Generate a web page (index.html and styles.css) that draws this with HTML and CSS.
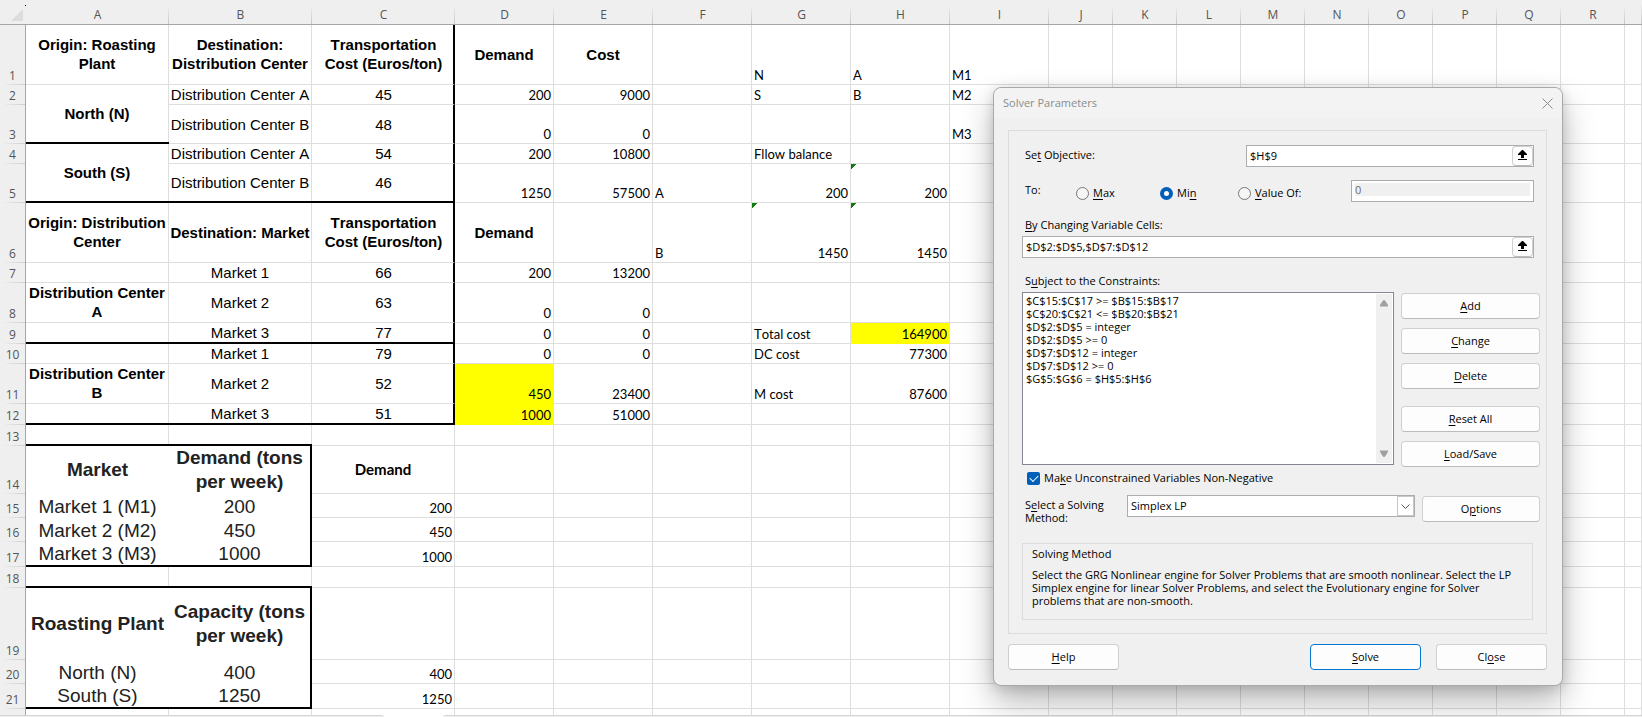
FILE: index.html
```html
<!DOCTYPE html>
<html lang="en">
<head>
    <meta charset="UTF-8">
    <meta name="viewport" content="width=device-width, initial-scale=1.0">
    <title>Transportation Model - Solver</title>
    <link rel="stylesheet" href="styles.css">
</head>
<body>
    <div class="workbook">
        <table class="sheet">
            <colgroup>
                <col class="col-head">
                <col class="col-wide" span="3">
                <col class="col-mid" span="6">
                <col class="col-small" span="9">
                <col>
            </colgroup>
            <thead>
                <tr>
                    <th class="corner"><svg width="12" height="12" viewBox="0 0 12 12"><path d="M12 0V12H0Z" fill="#dcdcdc"/></svg></th>
                    <th>A</th><th>B</th><th>C</th><th>D</th><th>E</th><th>F</th><th>G</th><th>H</th><th>I</th>
                    <th>J</th><th>K</th><th>L</th><th>M</th><th>N</th><th>O</th><th>P</th><th>Q</th><th>R</th><th></th>
                </tr>
            </thead>
            <tbody id="cells">
                <tr class="h60">
                    <th>1</th>
                    <td class="arial bold">Origin: Roasting Plant</td>
                    <td class="arial bold">Destination: Distribution Center</td>
                    <td class="arial bold edge-right">Transportation Cost (Euros/ton)</td>
                    <td class="arial bold">Demand</td>
                    <td class="arial bold">Cost</td>
                    <td></td><td>N</td><td>A</td><td>M1</td>
                </tr>
                <tr class="h20">
                    <th>2</th>
                    <td class="arial bold edge-bottom" rowspan="2">North (N)</td>
                    <td class="arial">Distribution Center A</td>
                    <td class="arial edge-right">45</td>
                    <td class="num">200</td><td class="num">9000</td>
                    <td></td><td>S</td><td>B</td><td>M2</td>
                </tr>
                <tr class="h39">
                    <th>3</th>
                    <td class="arial">Distribution Center B</td>
                    <td class="arial edge-right">48</td>
                    <td class="num">0</td><td class="num">0</td>
                    <td></td><td></td><td></td><td>M3</td>
                </tr>
                <tr class="h20">
                    <th>4</th>
                    <td class="arial bold edge-bottom" rowspan="2">South (S)</td>
                    <td class="arial">Distribution Center A</td>
                    <td class="arial edge-right">54</td>
                    <td class="num">200</td><td class="num">10800</td>
                    <td></td><td>Fllow balance</td><td></td><td></td>
                </tr>
                <tr class="h39">
                    <th>5</th>
                    <td class="arial edge-bottom">Distribution Center B</td>
                    <td class="arial edge-right edge-bottom">46</td>
                    <td class="num">1250</td><td class="num">57500</td>
                    <td>A</td><td class="num">200</td><td class="num flag">200</td><td></td>
                </tr>
                <tr class="h60">
                    <th>6</th>
                    <td class="arial bold">Origin: Distribution Center</td>
                    <td class="arial bold">Destination: Market</td>
                    <td class="arial bold edge-right">Transportation Cost (Euros/ton)</td>
                    <td class="arial bold">Demand</td><td></td>
                    <td>B</td><td class="num flag">1450</td><td class="num flag">1450</td><td></td>
                </tr>
                <tr class="h20">
                    <th>7</th>
                    <td></td><td class="arial">Market 1</td><td class="arial edge-right">66</td>
                    <td class="num">200</td><td class="num">13200</td>
                    <td></td><td></td><td></td><td></td>
                </tr>
                <tr class="h40">
                    <th>8</th>
                    <td class="arial bold">Distribution Center A</td><td class="arial">Market 2</td><td class="arial edge-right">63</td>
                    <td class="num">0</td><td class="num">0</td>
                    <td></td><td></td><td></td><td></td>
                </tr>
                <tr class="h21">
                    <th>9</th>
                    <td class="edge-bottom"></td><td class="arial edge-bottom">Market 3</td><td class="arial edge-right edge-bottom">77</td>
                    <td class="num">0</td><td class="num">0</td>
                    <td></td><td>Total cost</td><td class="num yellow">164900</td><td></td>
                </tr>
                <tr class="h20">
                    <th>10</th>
                    <td></td><td class="arial">Market 1</td><td class="arial edge-right">79</td>
                    <td class="num">0</td><td class="num">0</td>
                    <td></td><td>DC cost</td><td class="num">77300</td><td></td>
                </tr>
                <tr class="h40">
                    <th>11</th>
                    <td class="arial bold">Distribution Center B</td><td class="arial">Market 2</td><td class="arial edge-right">52</td>
                    <td class="num yellow">450</td><td class="num">23400</td>
                    <td></td><td>M cost</td><td class="num">87600</td><td></td>
                </tr>
                <tr class="h21">
                    <th>12</th>
                    <td class="edge-bottom"></td><td class="arial edge-bottom">Market 3</td><td class="arial edge-right edge-bottom">51</td>
                    <td class="num yellow">1000</td><td class="num">51000</td>
                    <td></td><td></td><td></td><td></td>
                </tr>
                <tr class="h21">
                    <th>13</th>
                    <td class="edge-bottom"></td><td class="edge-bottom"></td><td></td>
                    <td></td><td></td><td></td><td></td><td></td><td></td>
                </tr>
                <tr class="h48">
                    <th>14</th>
                    <td class="box box-title">Market</td><td class="box box-title edge-right">Demand (tons per week)</td>
                    <td class="mid-title">Demand</td>
                    <td></td><td></td><td></td><td></td><td></td><td></td>
                </tr>
                <tr class="h24">
                    <th>15</th>
                    <td class="box">Market 1 (M1)</td><td class="box edge-right">200</td><td class="num">200</td>
                    <td></td><td></td><td></td><td></td><td></td><td></td>
                </tr>
                <tr class="h24">
                    <th>16</th>
                    <td class="box">Market 2 (M2)</td><td class="box edge-right">450</td><td class="num">450</td>
                    <td></td><td></td><td></td><td></td><td></td><td></td>
                </tr>
                <tr class="h25">
                    <th>17</th>
                    <td class="box edge-bottom">Market 3 (M3)</td><td class="box edge-right edge-bottom">1000</td><td class="num">1000</td>
                    <td></td><td></td><td></td><td></td><td></td><td></td>
                </tr>
                <tr class="h21">
                    <th>18</th>
                    <td class="edge-bottom"></td><td class="edge-bottom"></td><td></td>
                    <td></td><td></td><td></td><td></td><td></td><td></td>
                </tr>
                <tr class="h72">
                    <th>19</th>
                    <td class="box box-title">Roasting Plant</td><td class="box box-title edge-right">Capacity (tons per week)</td><td></td>
                    <td></td><td></td><td></td><td></td><td></td><td></td>
                </tr>
                <tr class="h24">
                    <th>20</th>
                    <td class="box">North (N)</td><td class="box edge-right">400</td><td class="num">400</td>
                    <td></td><td></td><td></td><td></td><td></td><td></td>
                </tr>
                <tr class="h25">
                    <th>21</th>
                    <td class="box edge-bottom">South (S)</td><td class="box edge-right edge-bottom">1250</td><td class="num">1250</td>
                    <td></td><td></td><td></td><td></td><td></td><td></td>
                </tr>
                <tr class="last-row">
                    <th></th>
                    <td></td><td></td><td></td><td></td><td></td><td></td><td></td><td></td><td></td>
                </tr>
            </tbody>
        </table>
        <div class="tab-bar">
            <div class="tab-left"></div>
            <div class="tab-active"></div>
            <div class="tab-rest"></div>
        </div>
    </div>

    <form class="dialog">
        <div class="title-bar">
            <span>Solver Parameters</span>
            <button type="button" class="close-x" aria-label="Close dialog">
                <svg width="11" height="11" viewBox="0 0 11 11"><path d="M.5 .5L10.5 10.5M10.5 .5L.5 10.5" stroke="#8c8c8c" fill="none"/></svg>
            </button>
        </div>

        <div class="dialog-body">
            <div class="panel">
                <div class="row objective">
                    <label for="objective">Se<u>t</u> Objective:</label>
                    <div class="ref-box">
                        <input type="text" id="objective" value="$H$9">
                        <button type="button" class="pick" aria-label="Select objective cell">
                            <svg width="9" height="11" viewBox="0 0 9 11"><path d="M4 0H5L9 4V5H6V8H3V5H0V4ZM0 9H9V10H0Z" fill="#000"/></svg>
                        </button>
                    </div>
                </div>

                <div class="row target">
                    <span class="to">To:</span>
                    <label class="radio"><input type="radio" name="to"><span><u>M</u>ax</span></label>
                    <label class="radio"><input type="radio" name="to" checked><span>Mi<u>n</u></span></label>
                    <label class="radio"><input type="radio" name="to"><span><u>V</u>alue Of:</span></label>
                    <div class="value-box"><input type="text" value="0" aria-label="Value of" disabled></div>
                </div>

                <label class="caption" for="cells-ref"><u>B</u>y Changing Variable Cells:</label>
                <div class="ref-box wide">
                    <input type="text" id="cells-ref" value="$D$2:$D$5,$D$7:$D$12">
                    <button type="button" class="pick" aria-label="Select variable cells">
                        <svg width="9" height="11" viewBox="0 0 9 11"><path d="M4 0H5L9 4V5H6V8H3V5H0V4ZM0 9H9V10H0Z" fill="#000"/></svg>
                    </button>
                </div>

                <label class="caption" for="constraints">S<u>u</u>bject to the Constraints:</label>
                <div class="row constraints">
                    <div class="list-box">
                        <select id="constraints" size="7">
                            <option>$C$15:$C$17 &gt;= $B$15:$B$17</option>
                            <option>$C$20:$C$21 &lt;= $B$20:$B$21</option>
                            <option>$D$2:$D$5 = integer</option>
                            <option>$D$2:$D$5 &gt;= 0</option>
                            <option>$D$7:$D$12 = integer</option>
                            <option>$D$7:$D$12 &gt;= 0</option>
                            <option>$G$5:$G$6 = $H$5:$H$6</option>
                        </select>
                        <div class="scrollbar">
                            <svg width="8" height="7" viewBox="0 0 8 7"><path d="M3 .5Q4 -.5 5 .5L8 5V6.500H0V5Z" fill="#a0a0a0"/></svg>
                            <svg width="8" height="7" viewBox="0 0 8 7"><path d="M0 .5H8V2L5 6.500Q4 7.500 3 6.500L0 2Z" fill="#a0a0a0"/></svg>
                        </div>
                    </div>
                    <div class="side-buttons">
                        <button type="button"><u>A</u>dd</button>
                        <button type="button"><u>C</u>hange</button>
                        <button type="button"><u>D</u>elete</button>
                        <button type="button" class="reset"><u>R</u>eset All</button>
                        <button type="button"><u>L</u>oad/Save</button>
                    </div>
                </div>

                <label class="check">
                    <input type="checkbox" checked>
                    <span>Ma<u>k</u>e Unconstrained Variables Non-Negative</span>
                </label>

                <div class="row method">
                    <label for="method">S<u>e</u>lect a Solving Method:</label>
                    <div class="select-box">
                        <select id="method">
                            <option>GRG Nonlinear</option>
                            <option selected>Simplex LP</option>
                            <option>Evolutionary</option>
                        </select>
                        <span class="arrow"><svg width="9" height="5" viewBox="0 0 9 5"><path d="M.5 .5L4.500 4.500L8.500 .5" stroke="#555" fill="none"/></svg></span>
                    </div>
                    <button type="button" class="options">O<u>p</u>tions</button>
                </div>

                <div class="help-text">
                    <h2>Solving Method</h2>
                    <p>Select the GRG Nonlinear engine for Solver Problems that are smooth nonlinear. Select the LP Simplex engine for linear Solver Problems, and select the Evolutionary engine for Solver problems that are non-smooth.</p>
                </div>
            </div>

            <div class="footer">
                <button type="button"><u>H</u>elp</button>
                <button type="button" class="solve"><u>S</u>olve</button>
                <button type="button">Cl<u>o</u>se</button>
            </div>
        </div>
    </form>

    <script>
        // columns J to S are empty in every row
        const rows = document.querySelectorAll("#cells tr");
        rows.forEach(row => {
            for (let i = 0; i < 10; i++) {
                row.appendChild(document.createElement("td"));
            }
        });
    </script>
</body>
</html>
```
FILE: styles.css
```css
* {
    box-sizing: border-box;
}
body {
    margin: 0;
    height: 100vh;
    overflow: hidden;
    position: relative;
    background-color: #fff;
    color: #000;
    font-family: "Open Sans", "Noto Sans", sans-serif;
    font-size: 12px;
}
.workbook {
    display: flex;
    flex-direction: column;
    min-height: 100vh;
}

/* sheet */
.sheet {
    width: 100%;
    table-layout: fixed;
    border-collapse: separate;
    border-spacing: 0;
    font-family: Lato, sans-serif;
    font-size: 13px;
    line-height: 16px;
    font-kerning: none;
}
.col-head { width: 26px; }
.col-wide { width: 143px; }
.col-mid { width: 99px; }
.col-small { width: 64px; }
.sheet th {
    padding: 0;
    background-color: #efefef;
    color: #555;
    font-family: "Open Sans", "Noto Sans", sans-serif;
    font-size: 12px;
    font-weight: normal;
}
.sheet thead th {
    height: 25px;
    padding-top: 6px;
    border-bottom: 1px solid #a6a6a6;
    background-image: linear-gradient(to bottom, #efefef 20%, #c8c8c8);
    background-size: 1px 100%;
    background-position: right;
    background-repeat: no-repeat;
}
.sheet thead .corner {
    position: relative;
    padding: 5px 3px 0 0;
    text-align: right;
    background-image: none;
}
.corner svg {
    display: block;
    margin-left: auto;
}
.corner::after {
    content: "";
    position: absolute;
    right: 0;
    top: 5px;
    width: 1px;
    height: 1px;
    background-color: #000;
}
.sheet tbody th {
    vertical-align: bottom;
    border-right: 1px solid #a6a6a6;
    background-image: linear-gradient(to right, #efefef 10%, #cfcfcf);
    background-size: 100% 1px;
    background-position: bottom;
    background-repeat: no-repeat;
    padding-bottom: 1px;
}
.sheet td {
    padding: 0 2px 1px;
    border-right: 1px solid #dedede;
    border-bottom: 1px solid #dedede;
    vertical-align: bottom;
    white-space: nowrap;
}
.h20 { height: 20px; }
.h21 { height: 21px; }
.h24 { height: 24px; }
.h25 { height: 25px; }
.h39 { height: 39px; }
.h40 { height: 40px; }
.h48 { height: 48px; }
.h60 { height: 60px; }
.h72 { height: 72px; }
.last-row { height: 6px; }
.sheet .last-row td {
    border-bottom: none;
}
.sheet .last-row th {
    background-image: none;
    padding: 0;
}
.sheet .num {
    text-align: right;
}
.sheet .arial {
    padding: 0;
    font-family: "Liberation Sans", Arial, sans-serif;
    font-size: 15px;
    line-height: 19px;
    text-align: center;
    vertical-align: middle;
    white-space: normal;
}
.sheet .bold {
    padding-bottom: 1px;
    font-weight: bold;
}
.sheet .mid-title {
    font-size: 15px;
    font-weight: bold;
    text-align: center;
    vertical-align: middle;
}
.sheet .arial.edge-right {
    padding-left: 2px;
}
.sheet .box {
    padding: 1px 0 0;
    border: none;
    color: #222;
    font-family: "Liberation Sans", Arial, sans-serif;
    font-size: 19px;
    line-height: 22px;
    text-align: center;
    vertical-align: middle;
    white-space: normal;
}
.sheet .box-title {
    padding-top: 0;
    font-weight: bold;
    line-height: 24px;
}
.sheet .edge-right {
    border-right: 2px solid #000;
}
.sheet .edge-bottom {
    position: relative;
    border-bottom: 2px solid #000;
}
/* keeps the thick line unbroken where it crosses a thin one */
.sheet .edge-bottom::after {
    content: "";
    position: absolute;
    left: 0;
    right: -1px;
    bottom: -2px;
    height: 2px;
    background-color: #000;
}
.sheet .yellow {
    background-color: #ffff00;
    border-color: #ffff00;
}
.sheet .flag {
    background: linear-gradient(135deg, #107c10 4px, transparent 4px) no-repeat;
}

/* strip under the sheet */
.tab-bar {
    display: flex;
    flex: 1;
    min-height: 3px;
}
.tab-left {
    width: 384px;
    background-color: #efefef;
    border-top: 1px solid #d4d4d4;
    border-top-right-radius: 4px;
}
.tab-active {
    width: 59px;
}
.tab-rest {
    flex: 1;
    background-color: #efefef;
    border-top: 1px solid #d4d4d4;
    border-top-left-radius: 4px;
}

/* solver dialog */
.dialog {
    position: absolute;
    left: 993px;
    top: 87px;
    width: 570px;
    border: 1px solid #a9a9a9;
    border-radius: 8px;
    background-color: #f0f0f0;
    box-shadow: 0 16px 32px rgba(0, 0, 0, 0.28), 0 2px 12px rgba(0, 0, 0, 0.14);
    font-size: 11px;
    line-height: 16px;
}
.dialog input,
.dialog select,
.dialog button {
    font-family: inherit;
    font-size: inherit;
    color: inherit;
    margin: 0;
}
.dialog u {
    text-underline-offset: 2px;
}
.title-bar {
    display: flex;
    justify-content: space-between;
    align-items: center;
    height: 30px;
    padding: 0 9px;
    border-radius: 8px 8px 0 0;
    background-color: #f3f3f3;
    color: #8c8c8c;
}
.close-x {
    display: flex;
    padding: 0;
    border: none;
    background: none;
}
.dialog-body {
    padding: 12px 15px 15px 14px;
}
.dialog-body button {
    height: 26px;
    padding: 0 0 1px;
    border: 1px solid #d0d0d0;
    border-bottom-color: #bbb;
    border-radius: 4px;
    background-color: #fdfdfd;
}
.panel {
    padding: 14px 6px 13px 13px;
    border: 1px solid #dcdcdc;
}
.row {
    display: flex;
}
.objective {
    justify-content: space-between;
    padding: 0 6px 0 3px;
}
.objective label {
    padding-top: 2px;
}
.ref-box {
    display: flex;
    width: 288px;
    height: 22px;
    border: 1px solid #abadb3;
    background-color: #fff;
}
.ref-box.wide {
    width: auto;
    margin-right: 6px;
}
.ref-box input {
    flex: 1;
    min-width: 0;
    padding: 0 3px 1px;
    border: none;
    background: none;
}
.ref-box .pick {
    display: flex;
    justify-content: center;
    align-items: center;
    width: 21px;
    height: 20px;
}
.target {
    height: 22px;
    margin-top: 13px;
    padding: 0 6px 0 3px;
}
.to {
    width: 51px;
    padding-top: 2px;
}
.radio {
    display: flex;
    align-items: center;
    gap: 4px;
    width: 84px;
    height: 26px;
}
.radio:nth-of-type(2) {
    width: 78px;
}
.radio input {
    appearance: none;
    width: 13px;
    height: 13px;
    border: 1px solid #777;
    border-radius: 50%;
    background-color: #f6f6f6;
}
.radio input:checked {
    border: 4px solid #005fb8;
    background-color: #fff;
}
.value-box {
    width: 183px;
    height: 22px;
    margin-left: auto;
    padding: 2px 3px;
    border: 1px solid #abadb3;
    background-color: #fff;
}
.value-box input {
    display: block;
    width: 100%;
    height: 13px;
    padding: 0;
    border: none;
    background-color: #f0f0f0;
    color: #6d6d6d;
}
.caption {
    display: block;
    margin: 15px 0 3px;
    padding-left: 3px;
}
.list-box {
    display: flex;
    width: 372px;
    height: 173px;
    padding: 0 1px 1px;
    border: 1px solid #828790;
    background-color: #fff;
}
.list-box select {
    flex: 1;
    padding: 0;
    border: none;
    outline: none;
    background: none;
    overflow: hidden;
}
.list-box option {
    height: 13px;
    min-height: 13px;
    padding: 0 2px;
    line-height: 13px;
}
.scrollbar {
    display: flex;
    flex-direction: column;
    justify-content: space-between;
    align-items: center;
    width: 16px;
    margin-top: 1px;
    padding: 6px 0;
    background-color: #f0f0f0;
}
.side-buttons {
    display: flex;
    flex: 1;
    flex-direction: column;
    gap: 9px;
    margin: 1px 0 0 7px;
}
.side-buttons .reset {
    margin-top: 8px;
}
.check {
    display: flex;
    align-items: center;
    gap: 4px;
    height: 16px;
    margin-top: 3px;
    padding-left: 5px;
}
.check input {
    appearance: none;
    width: 13px;
    height: 13px;
    border-radius: 2px;
    background-color: #005fb8;
    display: grid;
    place-items: center;
}
.check input::before {
    content: "";
    width: 7px;
    height: 4px;
    margin-bottom: 2px;
    border-left: 1px solid #fff;
    border-bottom: 1px solid #fff;
    transform: rotate(-45deg);
}
.method {
    height: 30px;
    margin-top: 9px;
}
.method label {
    width: 105px;
    padding: 3px 16px 0 3px;
    line-height: 13px;
}
.select-box {
    display: flex;
    position: relative;
    width: 288px;
    height: 22px;
    border: 1px solid #abadb3;
    background-color: #fff;
}
.select-box select {
    appearance: none;
    flex: 1;
    padding: 0 3px 1px;
    border: none;
    background: none;
}
.arrow {
    position: absolute;
    top: 0;
    right: 0;
    display: flex;
    justify-content: center;
    align-items: center;
    width: 17px;
    height: 20px;
    border: 1px solid #c8c8c8;
    pointer-events: none;
}
.dialog-body .options {
    flex: 1;
    margin: 1px 0 0 7px;
}
.help-text {
    height: 77px;
    margin: 18px 7px 0 0;
    padding: 2px 9px;
    border: 1px solid #dcdcdc;
}
.help-text h2 {
    margin: 0;
    font-size: inherit;
    font-weight: normal;
}
.help-text p {
    margin: 6px 0 0;
    line-height: 13px;
}
.footer {
    display: flex;
    gap: 15px;
    margin-top: 10px;
}
.footer button {
    width: 111px;
}
.footer .solve {
    margin-left: auto;
    border: 1px solid #0078d4;
}
```
